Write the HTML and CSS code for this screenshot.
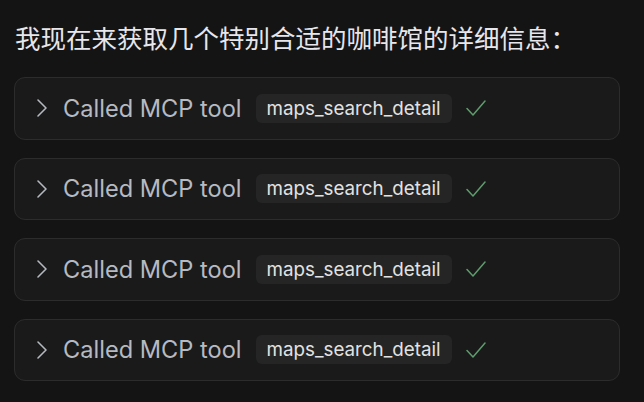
FILE: index.html
```html
<!DOCTYPE html>
<html lang="zh-CN">
<head>
    <meta charset="UTF-8">
    <meta name="viewport" content="width=device-width, initial-scale=1.0">
    <title>MCP tool calls</title>
    <link rel="stylesheet" href="styles.css">
</head>
<body>
    <div class="chat">
        <p class="message">我现在来获取几个特别合适的咖啡馆的详细信息：</p>

        <div class="tool-call">
            <svg class="chevron" width="12" height="20" viewBox="0 0 12 20"><path d="M2 2 L10 10 L2 18" fill="none" stroke="#b4b8bf" stroke-width="1.6" stroke-linecap="round" stroke-linejoin="round"/></svg>
            <span class="label">Called MCP tool</span>
            <code class="tool-name">maps_search_detail</code>
            <svg class="check" width="20" height="18" viewBox="0 0 20 18"><path d="M1 9.5 L7 16 L19 2" fill="none" stroke="#5f9c6d" stroke-width="1.5" stroke-linecap="round" stroke-linejoin="round"/></svg>
        </div>

        <div class="tool-call">
            <svg class="chevron" width="12" height="20" viewBox="0 0 12 20"><path d="M2 2 L10 10 L2 18" fill="none" stroke="#b4b8bf" stroke-width="1.6" stroke-linecap="round" stroke-linejoin="round"/></svg>
            <span class="label">Called MCP tool</span>
            <code class="tool-name">maps_search_detail</code>
            <svg class="check" width="20" height="18" viewBox="0 0 20 18"><path d="M1 9.5 L7 16 L19 2" fill="none" stroke="#5f9c6d" stroke-width="1.5" stroke-linecap="round" stroke-linejoin="round"/></svg>
        </div>

        <div class="tool-call">
            <svg class="chevron" width="12" height="20" viewBox="0 0 12 20"><path d="M2 2 L10 10 L2 18" fill="none" stroke="#b4b8bf" stroke-width="1.6" stroke-linecap="round" stroke-linejoin="round"/></svg>
            <span class="label">Called MCP tool</span>
            <code class="tool-name">maps_search_detail</code>
            <svg class="check" width="20" height="18" viewBox="0 0 20 18"><path d="M1 9.5 L7 16 L19 2" fill="none" stroke="#5f9c6d" stroke-width="1.5" stroke-linecap="round" stroke-linejoin="round"/></svg>
        </div>

        <div class="tool-call">
            <svg class="chevron" width="12" height="20" viewBox="0 0 12 20"><path d="M2 2 L10 10 L2 18" fill="none" stroke="#b4b8bf" stroke-width="1.6" stroke-linecap="round" stroke-linejoin="round"/></svg>
            <span class="label">Called MCP tool</span>
            <code class="tool-name">maps_search_detail</code>
            <svg class="check" width="20" height="18" viewBox="0 0 20 18"><path d="M1 9.5 L7 16 L19 2" fill="none" stroke="#5f9c6d" stroke-width="1.5" stroke-linecap="round" stroke-linejoin="round"/></svg>
        </div>
    </div>
</body>
</html>
```

FILE: styles.css
```css
body {
    margin: 0;
    background-color: #141414;
    font-family: Inter, "Noto Sans CJK SC", sans-serif;
    color: #e4e4ea;
}

.chat {
    width: 606px;
    padding: 19px 0 0 14px;
    display: flex;
    flex-direction: column;
    gap: 18px;
}

.message {
    margin: 0 0 4px 1px;
    font-family: "Noto Sans CJK SC", sans-serif;
    font-size: 25.5px;
    line-height: 36px;
    color: #e6e6ec;
}

.tool-call {
    box-sizing: border-box;
    height: 62.5px;
    display: flex;
    align-items: center;
    padding-left: 21px;
    background-color: #1a1a1a;
    border: 1.5px solid #2c2c2c;
    border-radius: 11px;
}

.chevron {
    flex-shrink: 0;
    margin-right: 15px;
}

.label {
    font-size: 23.6px;
    color: #b6bac2;
}

.tool-name {
    margin-left: 14px;
    padding: 3px 11px;
    background-color: #252525;
    border-radius: 6px;
    font-family: Inter, sans-serif;
    font-size: 18.8px;
    line-height: 23px;
    color: #e2e2e2;
}

.check {
    margin-left: 14px;
}
```
